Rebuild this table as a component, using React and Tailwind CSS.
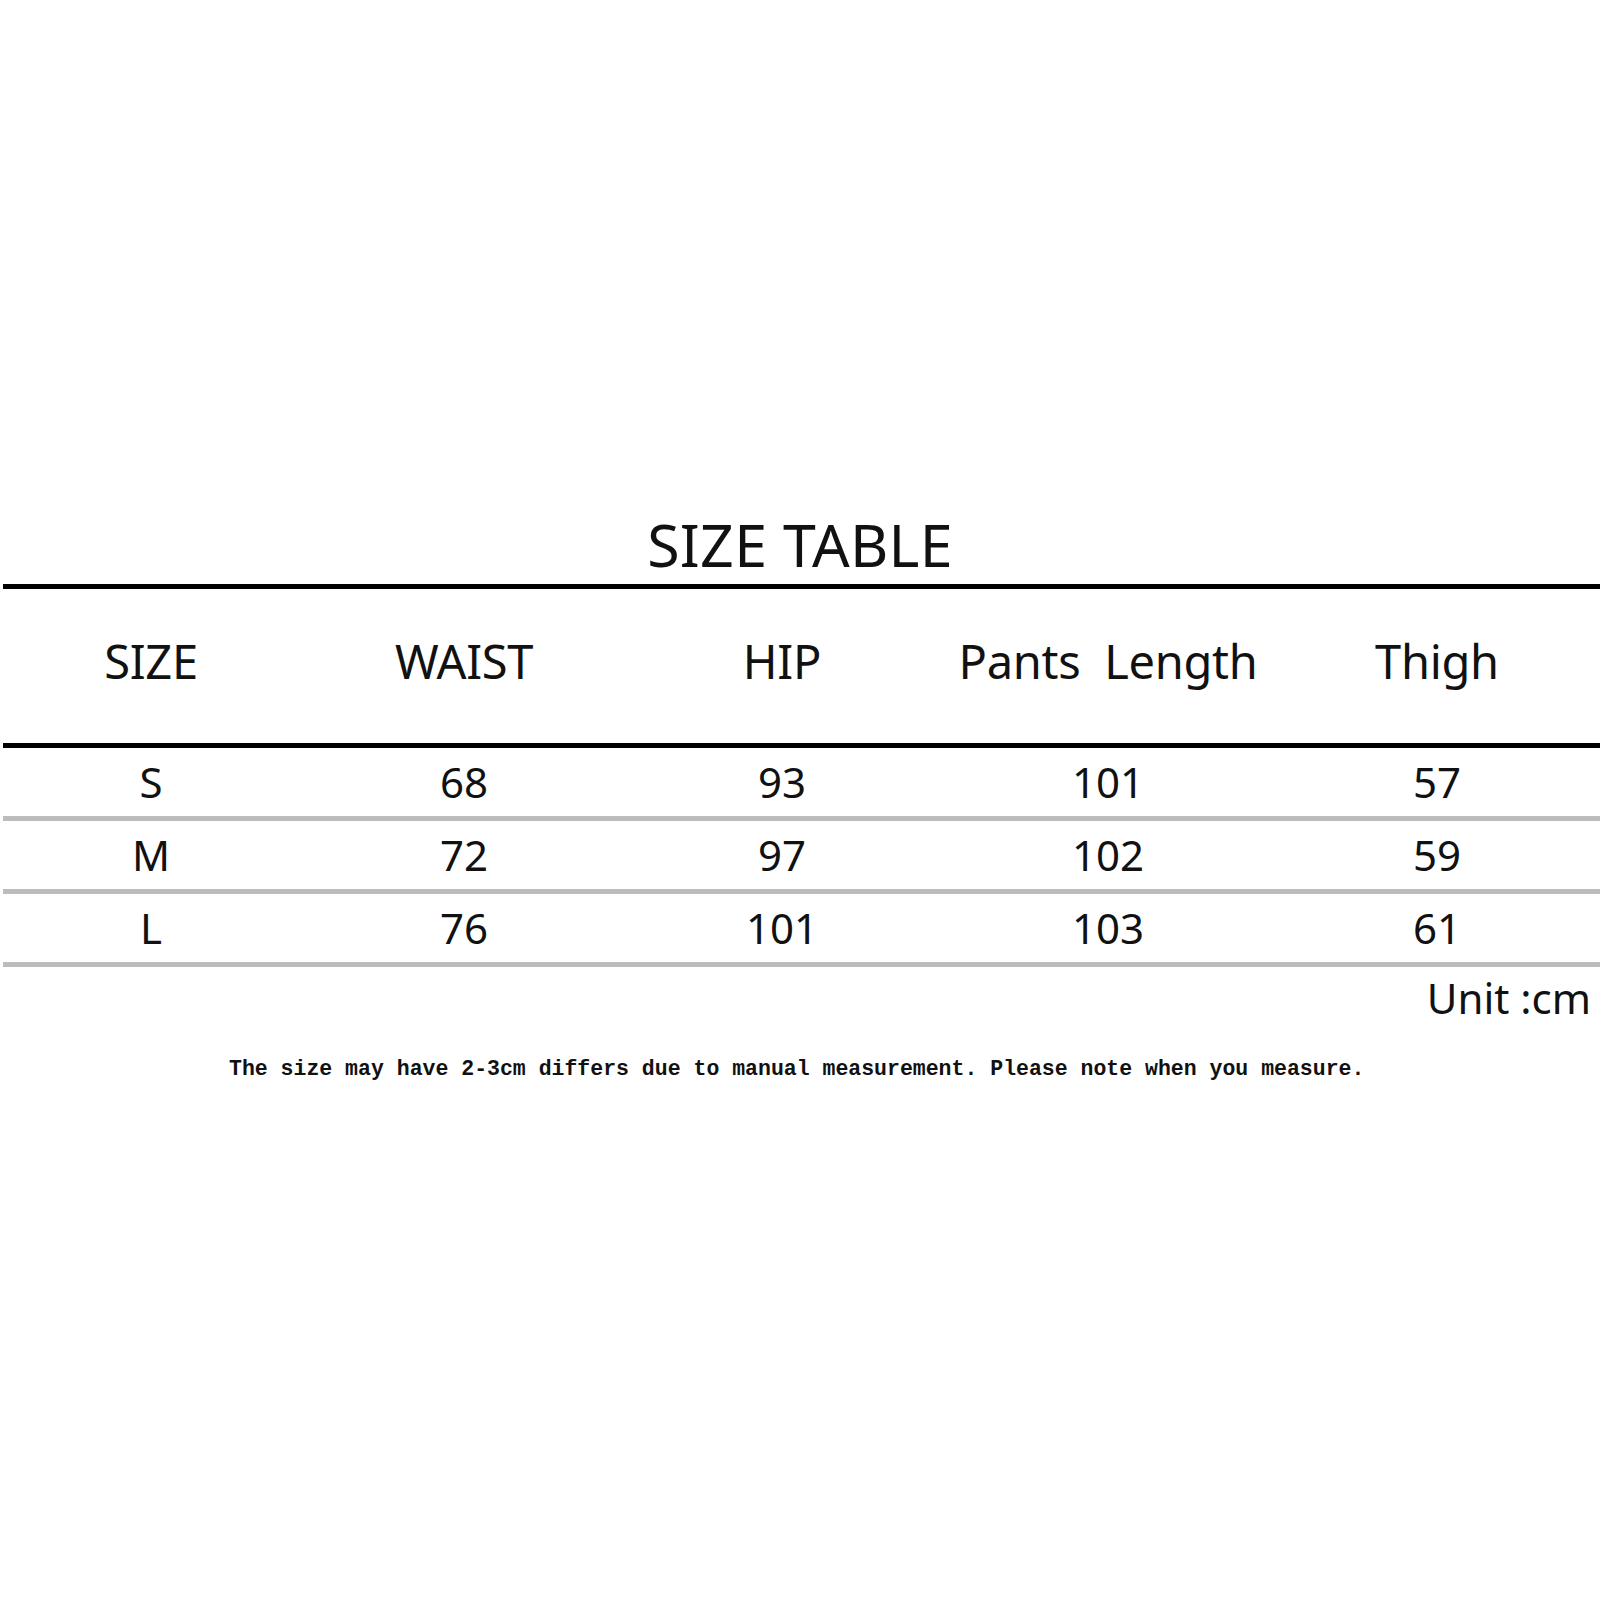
const cols = ["w-[302px]", "w-[324px]", "w-[312px]", "w-[340px]", "w-[318px]"]

const headers = ["SIZE", "WAIST", "HIP", "Pants  Length", "Thigh"]

const rows = [
  ["S", "68", "93", "101", "57"],
  ["M", "72", "97", "102", "59"],
  ["L", "76", "101", "103", "61"],
]

function Row({ cells, className }) {
  return (
    <div className={"flex items-center " + className}>
      {cells.map((c, i) => (
        <div key={i} className={cols[i] + " shrink-0 text-center leading-none whitespace-pre"}>
          {c}
        </div>
      ))}
    </div>
  )
}

export default function App() {
  return (
    <div className="w-[1600px] h-[1600px] bg-white text-[#111] font-['Noto_Sans',sans-serif] pt-[515px]">
      <h1 className="text-[59px] leading-none text-center h-[59px] tracking-[0.3px]">SIZE TABLE</h1>

      <div className="ml-[3px] mt-[10px] h-[5px] bg-black"></div>

      <Row cells={headers} className="h-[154px] !items-start pt-[49px] text-[47px] tracking-[-0.3px]" />

      <div className="ml-[3px] h-[5px] bg-black"></div>

      {rows.map((r, i) => (
        <div key={i}>
          <Row cells={r} className="h-[68px] text-[42px]" />
          <div className="ml-[3px] h-[5px] bg-[#bcbcbc]"></div>
        </div>
      ))}

      <div className="flex justify-end pr-[9px] mt-[10px]">
        <span className="text-[42px] leading-none">Unit :cm</span>
      </div>

      <p className="mt-[40px] pl-[229px] text-[21.5px] leading-none font-bold font-['Liberation_Mono',monospace] whitespace-pre">
        The size may have 2-3cm differs due to manual measurement. Please note when you measure.
      </p>
    </div>
  )
}
